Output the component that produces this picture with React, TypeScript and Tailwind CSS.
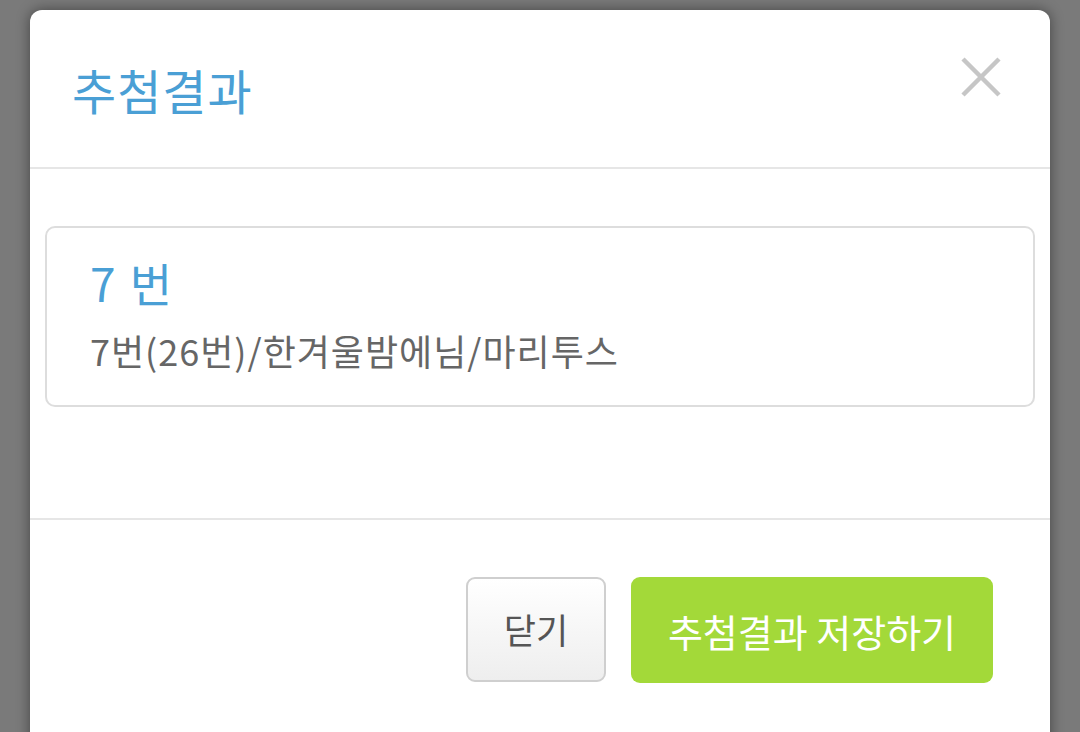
import React from "react";

export default function App() {
  const font = { fontFamily: '"Noto Sans CJK KR", "Noto Sans", sans-serif' };
  return (
    <div className="w-[1080px] h-[732px] overflow-hidden bg-[#7a7a7a] pt-[10px] px-[30px]" style={font}>
      <div className="bg-white rounded-t-[12px] h-[740px] shadow-[0_0_14px_rgba(0,0,0,0.45)] flex flex-col">
        <div className="h-[159px] border-b-2 border-[#e6e6e6] flex items-center justify-between pl-[42px] pr-[48px]">
          <h1 className="text-[48px] leading-[60px] text-[#4a9fd5] font-normal tracking-[1px]">추첨결과</h1>
          <svg width="42" height="42" viewBox="0 0 42 42" className="-mt-[24px]">
            <path d="M3 3 L39 39 M39 3 L3 39" stroke="#c6c6c6" strokeWidth="4.5" strokeLinecap="butt" />
          </svg>
        </div>
        <div className="h-[351px] border-b-2 border-[#e6e6e6] pt-[57px] px-[15px]">
          <div className="border-2 border-[#dddddd] rounded-[10px] pl-[43px] pt-[24px] pb-[29px]">
            <div className="text-[46px] leading-[60px] text-[#4a9fd5] tracking-[2px]">7 번</div>
            <div className="mt-[12px] text-[36px] leading-[52px] text-[#666666] tracking-[1px]">7번(26번)/한겨울밤에님/마리투스</div>
          </div>
        </div>
        <div className="flex justify-end gap-[25px] pt-[57px] pr-[57px]">
          <button className="w-[140px] h-[105px] rounded-[9px] border-2 border-[#cfcfcf] bg-gradient-to-b from-white to-[#eeeeee] text-[35px] text-[#555555]">
            닫기
          </button>
          <button className="w-[362px] h-[106px] rounded-[9px] bg-[#a3d939] text-[38px] text-white">
            추첨결과 저장하기
          </button>
        </div>
      </div>
    </div>
  );
}
